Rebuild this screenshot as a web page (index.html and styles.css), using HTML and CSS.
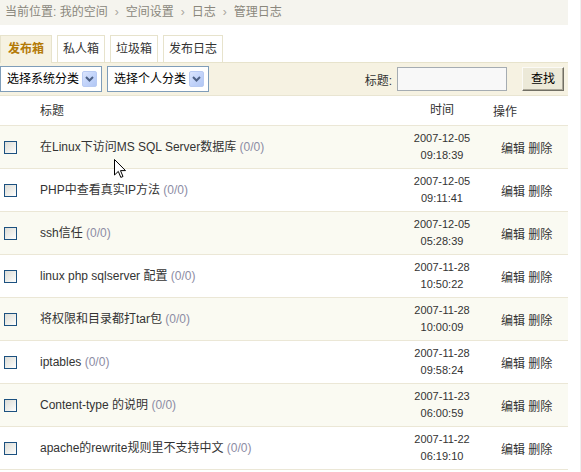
FILE: index.html
```html
<!DOCTYPE html>
<html lang="zh-CN">
<head>
<meta charset="utf-8">
<title>管理日志</title>
<link rel="stylesheet" href="styles.css">
</head>
<body>
<div class="frame">
  <div class="page">
    <div class="crumbs">当前位置: 我的空间<span class="sep">›</span>空间设置<span class="sep">›</span>日志<span class="sep">›</span>管理日志</div>

    <div class="tabs">
      <span class="tab active">发布箱</span>
      <span class="tab">私人箱</span>
      <span class="tab">垃圾箱</span>
      <span class="tab">发布日志</span>
    </div>

    <div class="toolbar">
      <div class="select">
        <span class="select-text">选择系统分类</span>
        <span class="select-btn"><svg width="9" height="6" viewBox="0 0 9 6"><path d="M1 1 L4.5 4.5 L8 1" fill="none" stroke="#4d6185" stroke-width="2"/></svg></span>
      </div>
      <div class="select">
        <span class="select-text">选择个人分类</span>
        <span class="select-btn"><svg width="9" height="6" viewBox="0 0 9 6"><path d="M1 1 L4.5 4.5 L8 1" fill="none" stroke="#4d6185" stroke-width="2"/></svg></span>
      </div>
      <div class="search">
        <label class="search-label">标题:</label>
        <span class="search-input"></span>
        <span class="search-btn">查找</span>
      </div>
    </div>

    <div class="list">
      <div class="row head">
        <span></span>
        <span class="c-title">标题</span>
        <span class="c-time">时间</span>
        <span class="c-op">操作</span>
      </div>

      <div class="row alt">
        <span class="c-check"><span class="checkbox"></span></span>
        <span class="c-title">在Linux下访问MS SQL Server数据库 <span class="count">(0/0)</span></span>
        <span class="c-time">2007-12-05<br>09:18:39</span>
        <span class="c-op">编辑 删除</span>
      </div>
      <div class="row">
        <span class="c-check"><span class="checkbox"></span></span>
        <span class="c-title">PHP中查看真实IP方法 <span class="count">(0/0)</span></span>
        <span class="c-time">2007-12-05<br>09:11:41</span>
        <span class="c-op">编辑 删除</span>
      </div>
      <div class="row alt">
        <span class="c-check"><span class="checkbox"></span></span>
        <span class="c-title">ssh信任 <span class="count">(0/0)</span></span>
        <span class="c-time">2007-12-05<br>05:28:39</span>
        <span class="c-op">编辑 删除</span>
      </div>
      <div class="row">
        <span class="c-check"><span class="checkbox"></span></span>
        <span class="c-title">linux php sqlserver 配置 <span class="count">(0/0)</span></span>
        <span class="c-time">2007-11-28<br>10:50:22</span>
        <span class="c-op">编辑 删除</span>
      </div>
      <div class="row alt">
        <span class="c-check"><span class="checkbox"></span></span>
        <span class="c-title">将权限和目录都打tar包 <span class="count">(0/0)</span></span>
        <span class="c-time">2007-11-28<br>10:00:09</span>
        <span class="c-op">编辑 删除</span>
      </div>
      <div class="row">
        <span class="c-check"><span class="checkbox"></span></span>
        <span class="c-title">iptables <span class="count">(0/0)</span></span>
        <span class="c-time">2007-11-28<br>09:58:24</span>
        <span class="c-op">编辑 删除</span>
      </div>
      <div class="row alt">
        <span class="c-check"><span class="checkbox"></span></span>
        <span class="c-title">Content-type 的说明 <span class="count">(0/0)</span></span>
        <span class="c-time">2007-11-23<br>06:00:59</span>
        <span class="c-op">编辑 删除</span>
      </div>
      <div class="row">
        <span class="c-check"><span class="checkbox"></span></span>
        <span class="c-title">apache的rewrite规则里不支持中文 <span class="count">(0/0)</span></span>
        <span class="c-time">2007-11-22<br>06:19:10</span>
        <span class="c-op">编辑 删除</span>
      </div>
    </div>
  </div>

  <svg class="cursor" width="13" height="20" viewBox="0 0 13 20">
    <path d="M0.5 0.5 L0.5 16 L4.3 12.4 L6.8 18.4 L9 17.5 L6.5 11.6 L11.5 11.6 Z" fill="#fff" stroke="#000" stroke-width="1" stroke-linejoin="miter"/>
  </svg>
</div>
</body>
</html>
```

FILE: styles.css
```css
* {
  box-sizing: border-box;
}

html, body {
  margin: 0;
  padding: 0;
  background: #fff;
}

body {
  font-family: "Liberation Sans", "Noto Sans CJK SC", sans-serif;
  font-size: 12px;
  color: #333;
}

.frame {
  position: relative;
  width: 581px;
  height: 472px;
  border-right: 1px solid #efefef;
  width: 581px;
}

.page {
  width: 568px;
}

/* breadcrumb */
.crumbs {
  height: 25px;
  line-height: 25px;
  padding-left: 5px;
  background: #f5f4ee;
  color: #8a877c;
}

.sep {
  color: #a8a69c;
  margin: 0 7px;
}

/* tabs */
.tabs {
  display: flex;
  gap: 5px;
  margin-top: 10px;
  align-items: flex-end;
}

.tab {
  height: 27px;
  line-height: 26px;
  padding: 0 5px;
  border: 1px solid #e7e3cc;
  border-bottom: none;
  background: #fff;
  color: #333;
}

.tab.active {
  padding: 0 7px;
  background: #f6f2e2;
  color: #b47a06;
  font-weight: bold;
  height: 28px;
  margin-bottom: -1px;
  position: relative;
  z-index: 1;
}

/* toolbar */
.toolbar {
  display: flex;
  align-items: center;
  gap: 5px;
  height: 34px;
  padding-right: 4px;
  background: #f6f2e2;
  border-top: 1px solid #e7e3cc;
  border-bottom: 1px solid #e9e5d2;
}

.select {
  display: flex;
  align-items: center;
  height: 26px;
  padding: 0 4px 0 6px;
  gap: 3px;
  background: #fff;
  border: 1px solid #7f9db9;
  color: #000;
}

.select-text {
  line-height: 18px;
}

.select-btn {
  display: flex;
  align-items: center;
  justify-content: center;
  width: 15px;
  height: 16px;
  border: 1px solid #b9cbf3;
  border-radius: 2px;
  background: linear-gradient(135deg, #dbe5fd 0%, #c3d4fa 50%, #b2c7f4 100%);
}

.search {
  margin-left: auto;
  display: flex;
  align-items: center;
}

.search-label {
  color: #333;
  margin-right: 5px;
}

.search-input {
  width: 110px;
  height: 24px;
  background: #f8f8f8;
  border: 1px solid #a5acb2;
  margin-right: 15px;
}

.search-btn {
  width: 42px;
  height: 24px;
  line-height: 22px;
  text-align: center;
  background: #ece9d8;
  color: #000;
  border: 1px solid;
  border-color: #fbfaf6 #716f64 #716f64 #fbfaf6;
  box-shadow: inset -1px -1px 0 #aca899;
  margin-top: -1px;
}

/* list */
.row {
  display: grid;
  grid-template-columns: 40px 1fr 60px 96px;
  align-items: center;
  height: 43px;
  border-bottom: 1px solid #ebe7d6;
  background: #fff;
}

.row.alt {
  background: #fafaf2;
}

.row.head {
  height: 30px;
}

.c-check {
  padding-left: 4px;
  display: flex;
  align-items: center;
}

.checkbox {
  display: block;
  width: 13px;
  height: 13px;
  border: 1px solid #1c5180;
  background: linear-gradient(135deg, #dcdcd7 0%, #f0f0ec 60%, #ffffff 100%);
}

.c-title {
  line-height: 18px;
  white-space: nowrap;
}

.count {
  color: #8c8ca4;
}

.c-time {
  text-align: center;
  font-size: 11px;
  line-height: 17px;
}

.row.head .c-time {
  font-size: 12px;
}

.c-op {
  padding-left: 29px;
  white-space: nowrap;
}

.row.head .c-op {
  padding-left: 21px;
}

/* mouse pointer captured in the screenshot */
.cursor {
  position: absolute;
  left: 114px;
  top: 159px;
}
```
